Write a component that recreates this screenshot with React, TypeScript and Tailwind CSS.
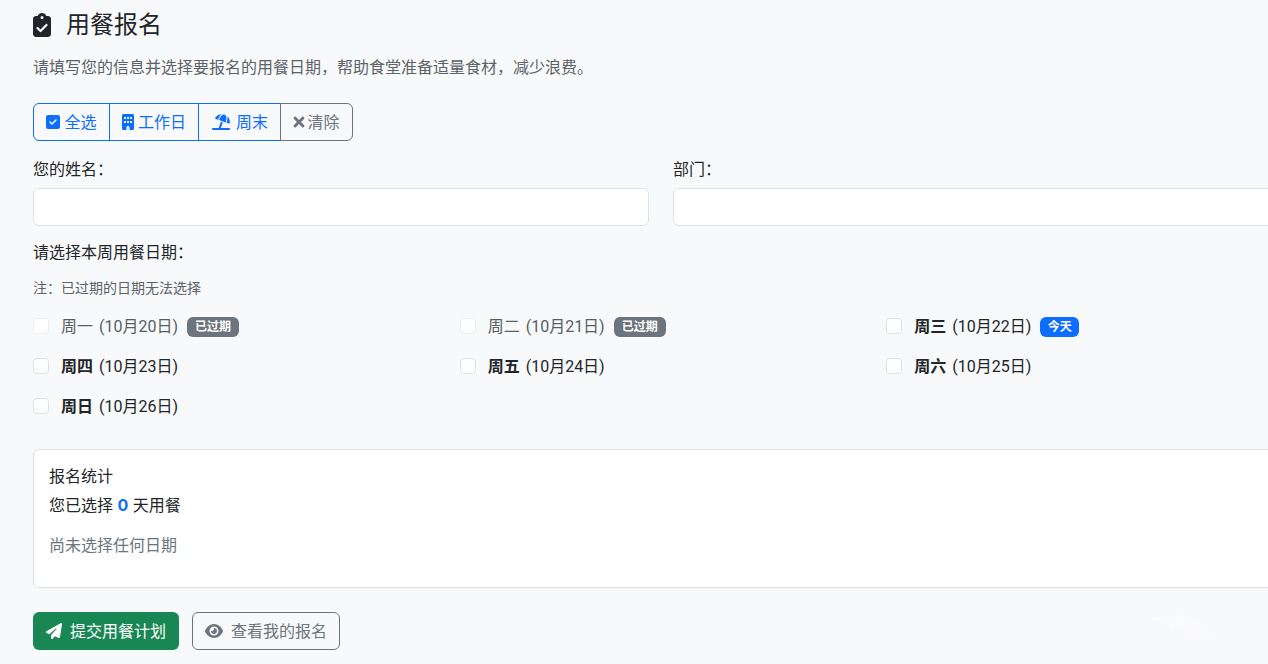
import { FaBuilding, FaSquareCheck, FaClipboardCheck, FaEye, FaPaperPlane, FaUmbrellaBeach } from "react-icons/fa6";
import { FaTimes } from "react-icons/fa";

const FONT = "font-['Inter','Noto_Sans_CJK_SC',sans-serif]";

type DayItem = {
  name: string;
  date: string;
  badge?: "expired" | "today";
};

const days: DayItem[] = [
  { name: "周一", date: "(10月20日)", badge: "expired" },
  { name: "周二", date: "(10月21日)", badge: "expired" },
  { name: "周三", date: "(10月22日)", badge: "today" },
  { name: "周四", date: "(10月23日)" },
  { name: "周五", date: "(10月24日)" },
  { name: "周六", date: "(10月25日)" },
  { name: "周日", date: "(10月26日)" },
];

function DayOption({ day }: { day: DayItem }) {
  const expired = day.badge === "expired";
  return (
    <div className="flex h-10 items-center">
      <span className={`h-4 w-4 shrink-0 rounded-[4px] border bg-white ${expired ? "border-[#eceef0]" : "border-[#dee2e6]"}`} />
      <span className={`ml-3 text-base ${expired ? "text-[#565e64]" : "text-[#212529]"}`}>
        {expired ? <span>{day.name}</span> : <strong className="font-bold">{day.name}</strong>}
        <span className="ml-[6px] font-['Roboto','Noto_Sans_CJK_SC',sans-serif]">{day.date}</span>
      </span>
      {day.badge === "expired" && (
        <span className="ml-[9px] mt-[2px] flex h-5 w-[52px] items-center justify-center rounded-md bg-[#6c757d] text-xs font-bold text-white">已过期</span>
      )}
      {day.badge === "today" && (
        <span className="ml-[9px] mt-[2px] flex h-5 w-[39px] items-center justify-center rounded-md bg-[#0d6efd] text-xs font-bold text-white">今天</span>
      )}
    </div>
  );
}

export default function App() {
  return (
    <div className={`relative h-[664px] w-[1268px] overflow-hidden bg-[#f8f9fb] text-[#212529] ${FONT}`}>
      <div className="w-[1289px] pl-[33px] pt-[8px]">
        <div className="flex h-[34px] items-center">
          <FaClipboardCheck className="h-6 w-[18px] text-[#212529]" />
          <h1 className="ml-[15px] text-2xl font-normal leading-[34px]">用餐报名</h1>
        </div>
        <p className="mt-[13px] text-base leading-6 text-[#5c636a]">请填写您的信息并选择要报名的用餐日期，帮助食堂准备适量食材，减少浪费。</p>

        <div className="mt-[24px] flex h-[38px] w-[320px] text-base">
          <button className="flex w-[77px] items-center justify-center gap-1 rounded-l-md border border-[#0d6efd] text-[#0d6efd]">
            <FaSquareCheck className="h-4 w-[14px]" />
            全选
          </button>
          <button className="-ml-px flex w-[90px] items-center justify-center gap-1 border border-[#0d6efd] text-[#0d6efd]">
            <FaBuilding className="h-4 w-3" />
            工作日
          </button>
          <button className="-ml-px flex w-[83px] items-center justify-center gap-[5px] border border-[#0d6efd] text-[#0d6efd]">
            <FaUmbrellaBeach className="h-4 w-5" />
            周末
          </button>
          <button className="-ml-px flex w-[73px] items-center justify-center gap-0.5 rounded-r-md border border-[#6c757d] text-[#6c757d]">
            <FaTimes className="h-4 w-3" />
            清除
          </button>
        </div>

        <div className="mt-[16px] grid grid-cols-2 gap-x-6">
          <div>
            <label className="block h-[26px] text-base leading-6">您的姓名：</label>
            <div className="mt-[5px] h-[38px] rounded-md border border-[#dee2e6] bg-white" />
          </div>
          <div>
            <label className="block h-[26px] text-base leading-6">部门：</label>
            <div className="mt-[5px] h-[38px] rounded-md border border-[#dee2e6] bg-white" />
          </div>
        </div>

        <div className="mt-[14px] text-base leading-6">请选择本周用餐日期：</div>
        <div className="mt-[13px] text-sm leading-[21px] text-[#5c636a]">注：已过期的日期无法选择</div>

        <div className="mt-[8px] grid w-[1280px] grid-cols-3">
          {days.map((day) => (
            <DayOption key={day.name} day={day} />
          ))}
        </div>

        <div className="mt-[23px] h-[139px] rounded-md border border-[#dee2e6] bg-white px-[15px] pt-[14px]">
          <div className="text-base leading-6">报名统计</div>
          <div className="mt-[5px] text-base leading-6">
            您已选择 <strong className="font-bold text-[#0d6efd]">0</strong> 天用餐
          </div>
          <div className="mt-[16px] text-base leading-6 text-[#6c757d]">尚未选择任何日期</div>
        </div>

        <div className="mt-[24px] flex gap-[13px] text-base">
          <button className="flex h-[38px] w-[146px] items-center justify-center gap-2 rounded-md bg-[#198754] text-white">
            <FaPaperPlane className="h-4 w-4" />
            提交用餐计划
          </button>
          <button className="flex h-[38px] w-[148px] items-center justify-center gap-2 rounded-md border border-[#6c757d] text-[#6c757d]">
            <FaEye className="h-4 w-[18px]" />
            查看我的报名
          </button>
        </div>
      </div>

      <svg className="absolute left-[1148px] top-[612px]" width="72" height="32" viewBox="0 0 72 32" fill="#ffffff" opacity="0.45">
        <path d="M3 5 L28 5 L33 1 L38 8 L30 16 L24 20 L18 12 L3 7 Z" />
        <path d="M32 14 L50 6 L66 28 L46 28 Z" opacity="0.7" />
      </svg>
    </div>
  );
}
